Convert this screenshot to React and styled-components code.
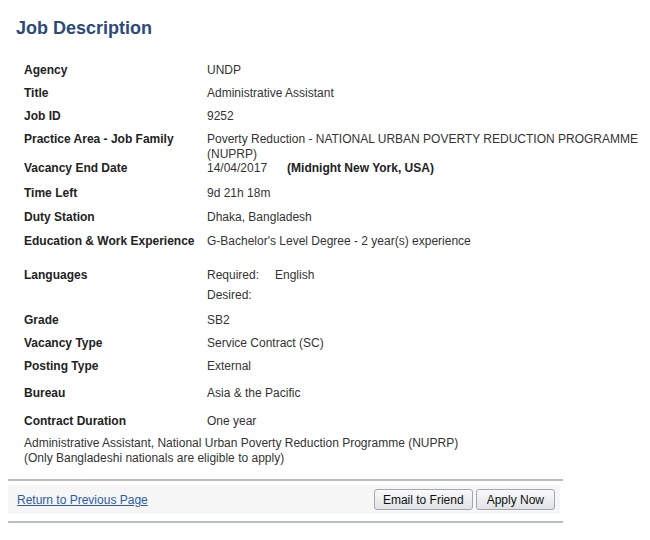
import React from "react";
import styled, { createGlobalStyle } from "styled-components";

const GlobalStyle = createGlobalStyle`
  body {
    margin: 0;
    background: #fff;
    font-family: "Liberation Sans", Arial, sans-serif;
    font-size: 12px;
    color: #333;
  }
`;

const Page = styled.div`
  width: 630px;
  padding: 17px 0 0 8px;
`;

const Heading = styled.h1`
  margin: 0 0 24px 8px;
  font-size: 18px;
  line-height: 22px;
  font-weight: bold;
  color: #2b4a7a;
`;

const Details = styled.div`
  padding-left: 16px;
`;

const Row = styled.div`
  display: flex;
  line-height: 15px;
  margin-bottom: ${(p) => p.$gap}px;
`;

const Label = styled.div`
  width: 183px;
  flex-shrink: 0;
  font-weight: bold;
  color: #222;
`;

const Value = styled.div`
  flex: 1;
  color: #333;
`;

const Note = styled.span`
  font-weight: bold;
  color: #222;
  margin-left: 20px;
`;

const LangLine = styled.div`
  display: flex;
  margin-bottom: ${(p) => p.$gap || 0}px;
`;

const LangKey = styled.span`
  width: 68px;
`;

const Summary = styled.p`
  margin: 1px 0 13px;
  line-height: 15px;
  color: #333;
`;

const Bottom = styled.div`
  width: 555px;
`;

const Rule = styled.hr`
  margin: 0;
  border: 0;
  height: 2px;
  background: #b8bcc4;
`;

const Footer = styled.div`
  display: flex;
  align-items: center;
  justify-content: space-between;
  margin: 4px 3px 7px 0;
  padding: 4px 5px 4px 9px;
  background: #f6f6f6;
`;

const BackLink = styled.a`
  color: #2c5ca8;
  text-decoration: underline;
  font-size: 12px;
`;

const Actions = styled.div`
  display: flex;
  gap: 3px;
`;

const Button = styled.button`
  margin: 0;
  height: 21px;
  padding: 0 ${(p) => p.$pad}px;
  font-family: "Liberation Sans", Arial, sans-serif;
  font-size: 12px;
  color: #111;
  border: 1px solid #a3a8b0;
  border-radius: 3px;
  background: linear-gradient(#fafafa, #dfe2e6);
`;

const rows = [
  ["Agency", "UNDP", 8],
  ["Title", "Administrative Assistant", 8],
  ["Job ID", "9252", 8],
  ["Practice Area - Job Family", "Poverty Reduction - NATIONAL URBAN POVERTY REDUCTION PROGRAMME (NUPRP)", -1],
];

const rows2 = [
  ["Time Left", "9d 21h 18m", 9],
  ["Duty Station", "Dhaka, Bangladesh", 9],
  ["Education & Work Experience", "G-Bachelor's Level Degree - 2 year(s) experience", 19],
];

const rows3 = [
  ["Grade", "SB2", 8],
  ["Vacancy Type", "Service Contract (SC)", 8],
  ["Posting Type", "External", 12],
  ["Bureau", "Asia & the Pacific", 13],
  ["Contract Duration", "One year", 7],
];

export default function App() {
  return (
    <Page>
      <GlobalStyle />
      <Heading>Job Description</Heading>
      <Details>
        {rows.map(([k, v, g]) => (
          <Row key={k} $gap={g}>
            <Label>{k}</Label>
            <Value>{v}</Value>
          </Row>
        ))}
        <Row $gap={10}>
          <Label>Vacancy End Date</Label>
          <Value>
            14/04/2017<Note>(Midnight New York, USA)</Note>
          </Value>
        </Row>
        {rows2.map(([k, v, g]) => (
          <Row key={k} $gap={g}>
            <Label>{k}</Label>
            <Value>{v}</Value>
          </Row>
        ))}
        <Row $gap={10}>
          <Label>Languages</Label>
          <Value>
            <LangLine $gap={5}>
              <LangKey>Required:</LangKey>
              <span>English</span>
            </LangLine>
            <LangLine>
              <LangKey>Desired:</LangKey>
            </LangLine>
          </Value>
        </Row>
        {rows3.map(([k, v, g]) => (
          <Row key={k} $gap={g}>
            <Label>{k}</Label>
            <Value>{v}</Value>
          </Row>
        ))}
        <Summary>
          Administrative Assistant, National Urban Poverty Reduction Programme (NUPRP)
          <br />
          (Only Bangladeshi nationals are eligible to apply)
        </Summary>
      </Details>
      <Bottom>
        <Rule />
        <Footer>
          <BackLink href="#">Return to Previous Page</BackLink>
          <Actions>
            <Button $pad={8}>Email to Friend</Button>
            <Button $pad={10}>Apply Now</Button>
          </Actions>
        </Footer>
        <Rule />
      </Bottom>
    </Page>
  );
}
